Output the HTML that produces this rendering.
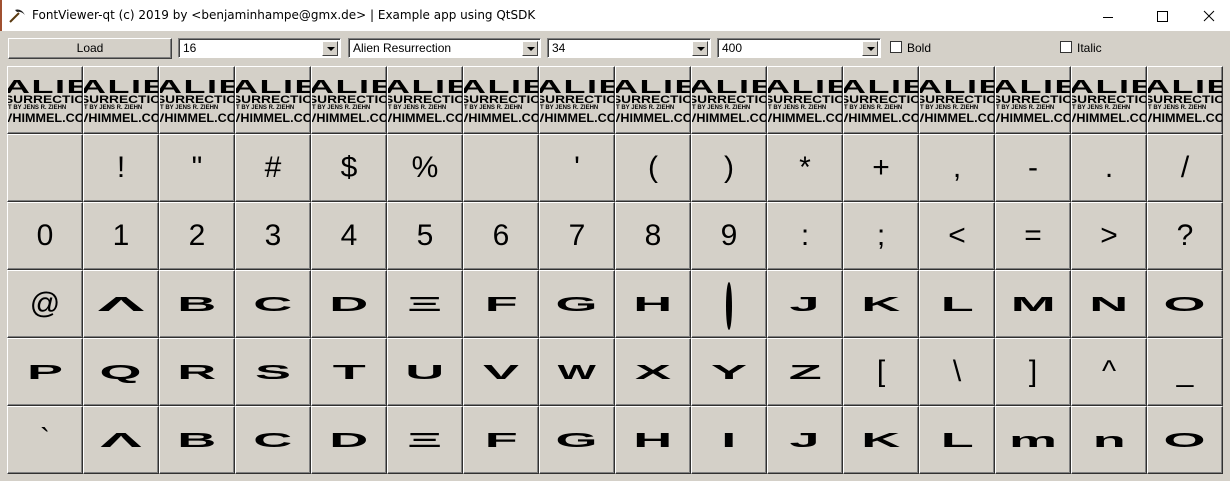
<!DOCTYPE html>
<html><head><style>
*{margin:0;padding:0;box-sizing:border-box}
body{width:1230px;height:481px;background:#d4d0c8;font-family:"Liberation Sans",sans-serif;position:relative;overflow:hidden}
.title{position:absolute;left:0;top:0;width:1230px;height:31px;background:#fff;border-left:2px solid #a05030;}
.title span{position:absolute;left:30px;top:8px;color:#000;font-family:"DejaVu Sans","Liberation Sans",sans-serif;font-size:12px}
.btn{position:absolute;left:8px;top:38px;width:164px;height:21px;background:#d4d0c8;border:1px solid;border-color:#fff #404040 #404040 #fff;box-shadow:inset -1px -1px #808080;font-size:12px;text-align:center;line-height:19px}
.cb{position:absolute;top:38px;height:20px;background:#fff;border:1px solid;border-color:#808080 #fff #fff #808080;box-shadow:inset 1px 1px #404040;font-size:12px;padding:2px 0 0 4px}
.cb i{position:absolute;right:2px;top:2px;width:16px;height:15px;background:#d4d0c8;border:1px solid;border-color:#fff #404040 #404040 #fff}
.cb i:after{content:"";position:absolute;left:4px;top:5px;border:4px solid transparent;border-top:4px solid #000;border-bottom:0}
.chk{position:absolute;top:41px;width:12px;height:12px;background:#fff;border:1px solid #333}
.lbl{position:absolute;top:41px;font-size:12px}
.c{position:absolute;width:76px;height:68px;border:1px solid;border-color:#fff #303030 #303030 #fff;box-shadow:inset -1px -1px #808080;overflow:hidden;text-align:center;color:#000}
.n{font-size:30px;line-height:66px}
.a{font-weight:bold;font-size:27px;line-height:66px;display:block}
.a b{display:inline-block;transform:scale(2.0,0.75)}
.h{font-weight:bold;line-height:1;text-align:left;white-space:nowrap;padding-top:13px;margin-left:-4px}
.h .l1{font-size:24px;transform:scale(1.5,0.75);transform-origin:0 50%;display:block;height:15px;line-height:15px;letter-spacing:1px}
.h .l2{font-size:11px;transform:scaleX(1.25);transform-origin:0 0;display:block;height:10px;line-height:10px}
.h .l3{font-size:6px;display:block;height:7px;line-height:7px;padding-left:4px}
.h .l4{font-size:12px;display:block;line-height:12px;transform:scaleX(1.05);transform-origin:0 0}
</style></head><body>
<div class="title"><svg style="position:absolute;left:6px;top:7px" width="18" height="16"><path d="M2 15 L11 6" stroke="#5a3a10" stroke-width="2"/><path d="M7 3 Q13 1 17 8 Q13 4 9 5Z" fill="#222"/></svg><span>FontViewer-qt (c) 2019 by &lt;benjaminhampe@gmx.de&gt; | Example app using QtSDK</span>
<svg style="position:absolute;left:1100px;top:10px" width="120" height="14"><path d="M1 7.5h10" stroke="#000"/><rect x="55.5" y="1.5" width="10" height="10" fill="none" stroke="#000"/><path d="M102 1l10 10M112 1l-10 10" stroke="#000"/></svg></div>
<div class="btn">Load</div>
<div class="cb" style="left:178px;width:163px">16<i></i></div>
<div class="cb" style="left:348px;width:193px">Alien Resurrection<i></i></div>
<div class="cb" style="left:547px;width:164px">34<i></i></div>
<div class="cb" style="left:717px;width:164px">400<i></i></div>
<div class="chk" style="left:890px"></div><div class="lbl" style="left:907px">Bold</div>
<div class="chk" style="left:1060px"></div><div class="lbl" style="left:1077px">Italic</div>

<div class="c" style="left:7px;top:66px"><div class="h"><span class="l1">ALIEN</span><span class="l2">SURRECTIO</span><span class="l3">T BY JENS R. ZIEHN</span><span class="l4">VHIMMEL.CO</span></div></div>
<div class="c" style="left:83px;top:66px"><div class="h"><span class="l1">ALIEN</span><span class="l2">SURRECTIO</span><span class="l3">T BY JENS R. ZIEHN</span><span class="l4">VHIMMEL.CO</span></div></div>
<div class="c" style="left:159px;top:66px"><div class="h"><span class="l1">ALIEN</span><span class="l2">SURRECTIO</span><span class="l3">T BY JENS R. ZIEHN</span><span class="l4">VHIMMEL.CO</span></div></div>
<div class="c" style="left:235px;top:66px"><div class="h"><span class="l1">ALIEN</span><span class="l2">SURRECTIO</span><span class="l3">T BY JENS R. ZIEHN</span><span class="l4">VHIMMEL.CO</span></div></div>
<div class="c" style="left:311px;top:66px"><div class="h"><span class="l1">ALIEN</span><span class="l2">SURRECTIO</span><span class="l3">T BY JENS R. ZIEHN</span><span class="l4">VHIMMEL.CO</span></div></div>
<div class="c" style="left:387px;top:66px"><div class="h"><span class="l1">ALIEN</span><span class="l2">SURRECTIO</span><span class="l3">T BY JENS R. ZIEHN</span><span class="l4">VHIMMEL.CO</span></div></div>
<div class="c" style="left:463px;top:66px"><div class="h"><span class="l1">ALIEN</span><span class="l2">SURRECTIO</span><span class="l3">T BY JENS R. ZIEHN</span><span class="l4">VHIMMEL.CO</span></div></div>
<div class="c" style="left:539px;top:66px"><div class="h"><span class="l1">ALIEN</span><span class="l2">SURRECTIO</span><span class="l3">T BY JENS R. ZIEHN</span><span class="l4">VHIMMEL.CO</span></div></div>
<div class="c" style="left:615px;top:66px"><div class="h"><span class="l1">ALIEN</span><span class="l2">SURRECTIO</span><span class="l3">T BY JENS R. ZIEHN</span><span class="l4">VHIMMEL.CO</span></div></div>
<div class="c" style="left:691px;top:66px"><div class="h"><span class="l1">ALIEN</span><span class="l2">SURRECTIO</span><span class="l3">T BY JENS R. ZIEHN</span><span class="l4">VHIMMEL.CO</span></div></div>
<div class="c" style="left:767px;top:66px"><div class="h"><span class="l1">ALIEN</span><span class="l2">SURRECTIO</span><span class="l3">T BY JENS R. ZIEHN</span><span class="l4">VHIMMEL.CO</span></div></div>
<div class="c" style="left:843px;top:66px"><div class="h"><span class="l1">ALIEN</span><span class="l2">SURRECTIO</span><span class="l3">T BY JENS R. ZIEHN</span><span class="l4">VHIMMEL.CO</span></div></div>
<div class="c" style="left:919px;top:66px"><div class="h"><span class="l1">ALIEN</span><span class="l2">SURRECTIO</span><span class="l3">T BY JENS R. ZIEHN</span><span class="l4">VHIMMEL.CO</span></div></div>
<div class="c" style="left:995px;top:66px"><div class="h"><span class="l1">ALIEN</span><span class="l2">SURRECTIO</span><span class="l3">T BY JENS R. ZIEHN</span><span class="l4">VHIMMEL.CO</span></div></div>
<div class="c" style="left:1071px;top:66px"><div class="h"><span class="l1">ALIEN</span><span class="l2">SURRECTIO</span><span class="l3">T BY JENS R. ZIEHN</span><span class="l4">VHIMMEL.CO</span></div></div>
<div class="c" style="left:1147px;top:66px"><div class="h"><span class="l1">ALIEN</span><span class="l2">SURRECTIO</span><span class="l3">T BY JENS R. ZIEHN</span><span class="l4">VHIMMEL.CO</span></div></div>

<div class="c n" style="left:7px;top:134px"></div>
<div class="c n" style="left:83px;top:134px">!</div>
<div class="c n" style="left:159px;top:134px">"</div>
<div class="c n" style="left:235px;top:134px">#</div>
<div class="c n" style="left:311px;top:134px">$</div>
<div class="c n" style="left:387px;top:134px">%</div>
<div class="c n" style="left:463px;top:134px"></div>
<div class="c n" style="left:539px;top:134px">'</div>
<div class="c n" style="left:615px;top:134px">(</div>
<div class="c n" style="left:691px;top:134px">)</div>
<div class="c n" style="left:767px;top:134px">*</div>
<div class="c n" style="left:843px;top:134px">+</div>
<div class="c n" style="left:919px;top:134px">,</div>
<div class="c n" style="left:995px;top:134px">-</div>
<div class="c n" style="left:1071px;top:134px">.</div>
<div class="c n" style="left:1147px;top:134px">/</div>

<div class="c n" style="left:7px;top:202px">0</div>
<div class="c n" style="left:83px;top:202px">1</div>
<div class="c n" style="left:159px;top:202px">2</div>
<div class="c n" style="left:235px;top:202px">3</div>
<div class="c n" style="left:311px;top:202px">4</div>
<div class="c n" style="left:387px;top:202px">5</div>
<div class="c n" style="left:463px;top:202px">6</div>
<div class="c n" style="left:539px;top:202px">7</div>
<div class="c n" style="left:615px;top:202px">8</div>
<div class="c n" style="left:691px;top:202px">9</div>
<div class="c n" style="left:767px;top:202px">:</div>
<div class="c n" style="left:843px;top:202px">;</div>
<div class="c n" style="left:919px;top:202px">&lt;</div>
<div class="c n" style="left:995px;top:202px">=</div>
<div class="c n" style="left:1071px;top:202px">&gt;</div>
<div class="c n" style="left:1147px;top:202px">?</div>

<div class="c n" style="left:7px;top:270px">@</div>
<div class="c" style="left:83px;top:270px"><span class="a"><b style="transform:scale(2.6,0.75)">Λ</b></span></div>
<div class="c" style="left:159px;top:270px"><span class="a"><b>B</b></span></div>
<div class="c" style="left:235px;top:270px"><span class="a"><b>C</b></span></div>
<div class="c" style="left:311px;top:270px"><span class="a"><b>D</b></span></div>
<div class="c" style="left:387px;top:270px"><span class="a"><b>Ξ</b></span></div>
<div class="c" style="left:463px;top:270px"><span class="a"><b>F</b></span></div>
<div class="c" style="left:539px;top:270px"><span class="a"><b>G</b></span></div>
<div class="c" style="left:615px;top:270px"><span class="a"><b>H</b></span></div>
<div class="c" style="left:691px;top:270px"><svg style="margin-top:10px" width="10" height="50"><ellipse cx="5" cy="25" rx="3" ry="24" fill="#000"/></svg></div>
<div class="c" style="left:767px;top:270px"><span class="a"><b>J</b></span></div>
<div class="c" style="left:843px;top:270px"><span class="a"><b>K</b></span></div>
<div class="c" style="left:919px;top:270px"><span class="a"><b>L</b></span></div>
<div class="c" style="left:995px;top:270px"><span class="a"><b>M</b></span></div>
<div class="c" style="left:1071px;top:270px"><span class="a"><b>N</b></span></div>
<div class="c" style="left:1147px;top:270px"><span class="a"><b>O</b></span></div>

<div class="c" style="left:7px;top:338px"><span class="a"><b>P</b></span></div>
<div class="c" style="left:83px;top:338px"><span class="a"><b>Q</b></span></div>
<div class="c" style="left:159px;top:338px"><span class="a"><b>R</b></span></div>
<div class="c" style="left:235px;top:338px"><span class="a"><b>S</b></span></div>
<div class="c" style="left:311px;top:338px"><span class="a"><b>T</b></span></div>
<div class="c" style="left:387px;top:338px"><span class="a"><b>U</b></span></div>
<div class="c" style="left:463px;top:338px"><span class="a"><b>V</b></span></div>
<div class="c" style="left:539px;top:338px"><span class="a"><b style="transform:scale(1.5,0.75)">W</b></span></div>
<div class="c" style="left:615px;top:338px"><span class="a"><b>X</b></span></div>
<div class="c" style="left:691px;top:338px"><span class="a"><b>Y</b></span></div>
<div class="c" style="left:767px;top:338px"><span class="a"><b>Z</b></span></div>
<div class="c n" style="left:843px;top:338px">[</div>
<div class="c n" style="left:919px;top:338px">\</div>
<div class="c n" style="left:995px;top:338px">]</div>
<div class="c n" style="left:1071px;top:338px">^</div>
<div class="c n" style="left:1147px;top:338px">_</div>

<div class="c n" style="left:7px;top:406px">`</div>
<div class="c" style="left:83px;top:406px"><span class="a"><b style="transform:scale(2.3,0.75)">Λ</b></span></div>
<div class="c" style="left:159px;top:406px"><span class="a"><b>B</b></span></div>
<div class="c" style="left:235px;top:406px"><span class="a"><b>C</b></span></div>
<div class="c" style="left:311px;top:406px"><span class="a"><b>D</b></span></div>
<div class="c" style="left:387px;top:406px"><span class="a"><b>Ξ</b></span></div>
<div class="c" style="left:463px;top:406px"><span class="a"><b>F</b></span></div>
<div class="c" style="left:539px;top:406px"><span class="a"><b>G</b></span></div>
<div class="c" style="left:615px;top:406px"><span class="a"><b>H</b></span></div>
<div class="c" style="left:691px;top:406px"><span class="a"><b>I</b></span></div>
<div class="c" style="left:767px;top:406px"><span class="a"><b>J</b></span></div>
<div class="c" style="left:843px;top:406px"><span class="a"><b>K</b></span></div>
<div class="c" style="left:919px;top:406px"><span class="a"><b>L</b></span></div>
<div class="c" style="left:995px;top:406px"><span class="a"><b>m</b></span></div>
<div class="c" style="left:1071px;top:406px"><span class="a"><b>n</b></span></div>
<div class="c" style="left:1147px;top:406px"><span class="a"><b>O</b></span></div>
</body></html>
